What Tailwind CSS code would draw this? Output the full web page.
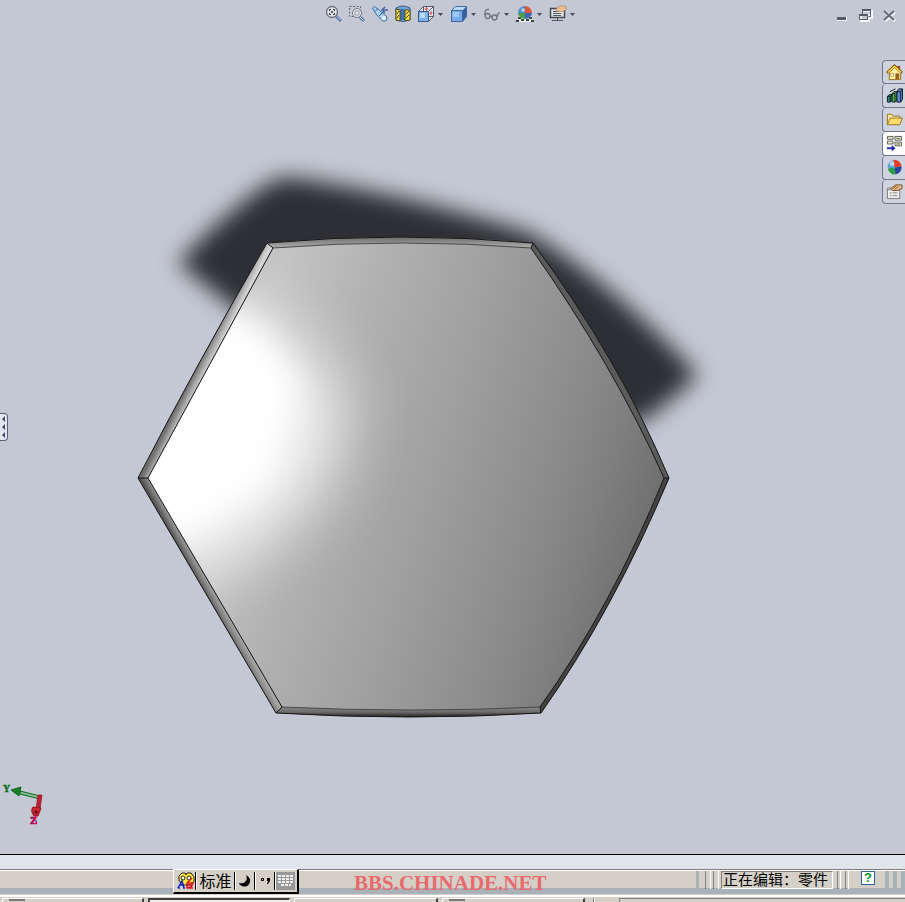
<!DOCTYPE html>
<html lang="zh-CN">
<head>
    <meta charset="UTF-8">
    <meta name="viewport" content="width=device-width, initial-scale=1.0">
    <title>零件</title>
    <script src="https://cdn.jsdelivr.net/npm/@tailwindcss/browser@4"></script>
</head>
<body class="min-h-screen flex flex-col overflow-hidden bg-[#c4c8d4] text-black font-['Liberation_Sans','Noto_Sans_CJK_SC',sans-serif]">

    <!-- Graphics area -->
    <main class="relative flex-1 flex flex-col min-h-[640px]">
        <svg class="absolute inset-0 w-full h-full" viewBox="0 0 905 854" role="img" aria-label="Part">
            <defs>
                <filter id="shadow" x="-20%" y="-30%" width="140%" height="160%" color-interpolation-filters="sRGB"><feGaussianBlur stdDeviation="11"/></filter>
                <filter id="soft" x="-50%" y="-50%" width="200%" height="200%" color-interpolation-filters="sRGB"><feGaussianBlur stdDeviation="32"/></filter>
                <filter id="glow" x="-50%" y="-50%" width="200%" height="200%" color-interpolation-filters="sRGB"><feGaussianBlur stdDeviation="16"/></filter>
                <linearGradient id="face" gradientUnits="userSpaceOnUse" x1="280" y1="270" x2="689" y2="393">
                    <stop offset="0" stop-color="#c4c4c4"/>
                    <stop offset=".24" stop-color="#b0b0b0"/>
                    <stop offset=".46" stop-color="#a1a1a1"/>
                    <stop offset=".55" stop-color="#9a9a9a"/>
                    <stop offset=".75" stop-color="#8b8b8b"/>
                    <stop offset=".87" stop-color="#7f7f7f"/>
                    <stop offset="1" stop-color="#707070"/>
                </linearGradient>
                <linearGradient id="upperLeft" gradientUnits="userSpaceOnUse" x1="201" y1="359" x2="211" y2="364">
                    <stop offset="0" stop-color="#707070"/><stop offset=".5" stop-color="#a8a9aa"/><stop offset="1" stop-color="#d4d4d4"/>
                </linearGradient>
                <linearGradient id="lowerLeft" gradientUnits="userSpaceOnUse" x1="206" y1="596" x2="215" y2="591">
                    <stop offset="0" stop-color="#555"/><stop offset=".5" stop-color="#858585"/><stop offset="1" stop-color="#a8a8a6"/>
                </linearGradient>
                <linearGradient id="top" gradientUnits="userSpaceOnUse" x1="0" y1="237" x2="0" y2="248">
                    <stop offset="0" stop-color="#6c6c6c"/><stop offset="1" stop-color="#b0b0b0"/>
                </linearGradient>
                <linearGradient id="bottom" gradientUnits="userSpaceOnUse" x1="0" y1="707" x2="0" y2="717">
                    <stop offset="0" stop-color="#868686"/><stop offset=".5" stop-color="#6c6c6c"/><stop offset="1" stop-color="#222"/>
                </linearGradient>
                <clipPath id="faceClip"><path d="M148 478L273 248Q402 238 531 248Q614 366 664 478Q612 606 540 707Q411 713 282 707Z"/></clipPath>
            </defs>

            <path filter="url(#shadow)" fill="#2e2f34" d="M178 263Q222 215 270 182Q284 174 310 180Q420 198 530 233Q614 284 698 375Q672 400 642 422L400 430L234 308Z"/>

            <!-- Bevels -->
            <path fill="#777" d="M138 478Q200 358 267 243Q400 231 533 243Q619 359 669 478Q613 611 541 713Q409 721 276 713Z"/>
            <path fill="url(#upperLeft)" d="M138 478Q200 358 267 243L273 248L148 478Z"/>
            <path fill="url(#lowerLeft)" d="M138 478L276 713L282 707L148 478Z"/>
            <path fill="url(#top)" d="M267 243Q400 231 533 243L531 248Q402 238 273 248Z"/>
            <path fill="url(#bottom)" d="M276 713Q409 721 541 713L540 707Q411 713 282 707Z"/>
            <path fill="#5a5b5b" d="M533 243Q619 359 669 478L664 478Q614 366 531 248Z"/>
            <path fill="#424342" d="M669 478Q613 611 541 713L540 707Q612 606 664 478Z"/>

            <!-- Face with highlight -->
            <g clip-path="url(#faceClip)">
                <rect x="130" y="230" width="550" height="490" fill="url(#face)"/>
                <path filter="url(#soft)" fill="#f2f2f2" d="M90 478L195 300L265 310L345 390L330 480L265 545L170 590Z"/>
                <path filter="url(#glow)" fill="#fff" d="M80 478L215 300L262 330L297 382L282 440L266 485L210 520L150 560Z"/>
            </g>

            <g fill="none" stroke="#151515" stroke-width="1">
                <path d="M138 478Q200 358 267 243Q400 231 533 243Q619 359 669 478Q613 611 541 713Q409 721 276 713Z"/>
                <path d="M273 248L148 478L282 707M531 248Q614 366 664 478Q612 606 540 707"/>
                <path stroke="#4b4b4b" d="M273 248Q402 238 531 248M540 707Q411 713 282 707"/>
                <path d="M138 478h10M267 243l6 5M533 243l-2 5M669 478h-5M541 713l-1-6M276 713l6-6"/>
            </g>
        </svg>

        <!-- View toolbar -->
        <header class="relative grid grid-cols-[1fr_auto_1fr] items-center h-7">
            <span></span>
            <nav class="flex items-center pr-1" aria-label="View">
                <button class="w-[23px] flex justify-center" aria-label="Zoom to fit">
                    <svg class="w-[18px] h-[18px]" viewBox="0 0 18 18" fill="none"><path d="M11 11l5 5" stroke="#5577aa" stroke-width="3"/><path d="M11.500 11l4 4" stroke="#c9d9ee"/><circle cx="7" cy="7" r="5.500" fill="#e1e5ea" stroke="#686c74" stroke-width="1.300"/><path d="M4.500 6V4.500h1.500M8 4.500h1.500v1.500M9.500 8v1.500H8M6 9.500H4.500V8" stroke="#333"/><path d="M6 6h2v2H6z" fill="#555"/></svg>
                </button>
                <button class="w-[23px] flex justify-center" aria-label="Zoom to area">
                    <svg class="w-[18px] h-[18px]" viewBox="0 0 18 18" fill="none"><path d="M1.500 1.500h11v10h-11z" stroke="#62666e" stroke-dasharray="2 1.500"/><path d="M12 12l4 4" stroke="#5577aa" stroke-width="3"/><path d="M12 12l3.500 3.500" stroke="#c9d9ee"/><circle cx="9" cy="8" r="4.500" fill="#e1e5ea" stroke="#777b82"/><path d="M7 7V6h4v4H7z" stroke="#9a9ea5"/></svg>
                </button>
                <button class="w-[23px] flex justify-center" aria-label="Previous view">
                    <svg class="w-[18px] h-[18px]" viewBox="0 0 18 18" fill="none"><path d="M1.500 3l2-1.500 4 3L15 11a3 3 0 0 1-4 4.500L5 9z" fill="#a7d2f3" stroke="#456f9f"/><path d="M4 6.500l3-3M8 11l4-4" stroke="#345f94"/><circle cx="13" cy="13" r="2" fill="#e7f6ff"/><path d="M17 5h-6m3-3l-3 3 3 3" stroke="#4a62a6" stroke-width="1.500"/></svg>
                </button>
                <button class="w-[23px] flex justify-center" aria-label="Section view">
                    <svg class="w-[18px] h-[18px]" viewBox="0 0 18 18"><path d="M2 3q7-4 14 0v12q-7 3-14 0z" fill="#74a5d9" stroke="#365b88"/><path d="M6 4h5v11H6z" fill="#3e73ae"/><path d="M2 4l4 1v11l-4-1zM11 5h5v10l-5 1z" fill="#f3dd45" stroke="#504b20"/><path d="M3 9l2-3M3 13l2-3M12 9l3-3M12 13l3-3" stroke="#504b20"/></svg>
                </button>
                <button class="w-[33px] flex items-center gap-[3px] pl-[3px]" aria-label="View orientation">
                    <svg class="w-[18px] h-[18px]" viewBox="0 0 18 18"><path d="M1.500 6.500l5-5h10v10l-5 5h-10z" fill="#e6e8ef" stroke="#555b68"/><path d="M1.500 6.500h10v10h-10z" fill="#7eb1ec" stroke="#38598a"/><path d="M3 8h5v5H3z" fill="#b8dcfb"/><path d="M11.500 6.500l5-5M6.500 1.500v5M11.500 11.500h5" stroke="#555b68" fill="none"/><path d="M7.500 4h4M9.500 2v4M12.500 8h3M14 6v4" stroke="#c8505a"/></svg>
                    <svg class="w-[5px] h-[3px]" viewBox="0 0 5 3"><path d="M0 0h5L2.500 3z" fill="#444b5d"/></svg>
                </button>
                <button class="w-[33px] flex items-center gap-[3px] pl-[3px]" aria-label="Display style">
                    <svg class="w-[18px] h-[18px]" viewBox="0 0 18 18"><path d="M1.500 5.500l4-4h11v10l-4 5h-11z" fill="#b9daf7" stroke="#43689e"/><path d="M12.500 5.500l4-4v10l-4 5z" fill="#375f9f"/><path d="M1.500 5.500h11v11h-11z" fill="#78aae9" stroke="#43689e"/><path d="M3 7h6v5H3z" fill="#9fcafa"/></svg>
                    <svg class="w-[5px] h-[3px]" viewBox="0 0 5 3"><path d="M0 0h5L2.500 3z" fill="#444b5d"/></svg>
                </button>
                <button class="w-[33px] flex items-center gap-[3px] pl-[3px]" aria-label="Hide or show items">
                    <svg class="w-[18px] h-[18px]" viewBox="0 0 18 18" fill="none" stroke="#70757f" stroke-width="1.300"><circle cx="4.500" cy="11" r="2.500"/><circle cx="11.500" cy="12.500" r="2.500"/><path d="M2 10Q1 4 6 4.500M7 11.500h2M14 12q1-5 3-4"/></svg>
                    <svg class="w-[5px] h-[3px]" viewBox="0 0 5 3"><path d="M0 0h5L2.500 3z" fill="#444b5d"/></svg>
                </button>
                <button class="w-[33px] flex items-center gap-[3px] pl-[3px]" aria-label="Apply scene">
                    <svg class="w-[18px] h-[18px]" viewBox="0 0 18 18"><path d="M3 11h12l3 6H0z" fill="#e9eee9"/><path d="M2 12h3v2H2zM0 15h3v2H0zM5 14h3v2H5zM10 14h3v2h-3zM13 12h3v2h-3zM15 15h3v2h-3z" fill="#36463c"/><path d="M9 8V1a7 7 0 0 0-7 7z" fill="#458ac3"/><path d="M9 8V1a7 7 0 0 1 7 7z" fill="#df553b"/><path d="M9 8H2a7 6 0 0 0 7 6z" fill="#4d9f50"/><path d="M9 8h7a7 6 0 0 1-7 6z" fill="#3f67b4"/><circle cx="7" cy="5" r="2" fill="#ccebf3" opacity=".7"/></svg>
                    <svg class="w-[5px] h-[3px]" viewBox="0 0 5 3"><path d="M0 0h5L2.500 3z" fill="#444b5d"/></svg>
                </button>
                <button class="w-[33px] flex items-center gap-[3px] pl-[3px]" aria-label="View settings">
                    <svg class="w-[18px] h-[18px]" viewBox="0 0 18 18"><path d="M1.500 3.500h14v9h-14z" fill="#e1e2e5" stroke="#45484e" stroke-width="1.500"/><path d="M4 6.500h6M4 8.500h8M4 10.500h8M8.500 13v3M3 15.500h11" stroke="#55585e"/><path d="M7 4l4-3h6v4l-4 1.500H8z" fill="#eabf90" stroke="#9a7247" stroke-width=".5"/></svg>
                    <svg class="w-[5px] h-[3px]" viewBox="0 0 5 3"><path d="M0 0h5L2.500 3z" fill="#444b5d"/></svg>
                </button>
            </nav>
            <div class="flex justify-end gap-2 pr-2">
                <button aria-label="Minimize"><svg class="w-4 h-4" viewBox="0 0 16 16"><path d="M4 11h10v4H4z" fill="#f4f5f8"/><path d="M4 11h9v3H4z" fill="#555c69"/></svg></button>
                <button aria-label="Restore"><svg class="w-4 h-4" viewBox="0 0 16 16" fill="none"><path d="M6 5h9v7h-3M4 9h8v6H4z" stroke="#f5f6f9" stroke-width="2"/><path d="M5.500 8V4.500h8v6h-2" stroke="#555c69"/><path d="M5 4h9M2 9h9" stroke="#555c69" stroke-width="2"/><path d="M2.500 9.500h8v4h-8z" stroke="#555c69"/></svg></button>
                <button aria-label="Close"><svg class="w-4 h-4" viewBox="0 0 16 16" fill="none"><path d="M4 6l10 9M14 6L4 15" stroke="#f5f6f9" stroke-width="3"/><path d="M3 5l10 9M13 5L3 14" stroke="#626a77" stroke-width="2"/></svg></button>
            </div>
        </header>

        <!-- Task pane tabs -->
        <aside class="relative self-end mt-8 w-[23px] flex flex-col">
            <button class="h-6 flex items-center justify-center border border-r-0 border-[#6f778e] rounded-l-sm bg-[#cfd3df]" aria-label="Resources">
                <svg class="w-[17px] h-[17px]" viewBox="0 0 18 18"><path d="M12 2h3v6h-3z" fill="#a44a2e"/><path d="M3.500 9v7.500h12V9L9 3z" fill="#fff0a5" stroke="#9b6d16"/><path d="M1 9.500L9 2l8 7.500" fill="none" stroke="#8d6013" stroke-width="3"/><path d="M2 9l7-6.500L16 9" fill="none" stroke="#ffd64b" stroke-width="1.500"/><path d="M5 10h3v3H5z" fill="#fff" stroke="#ad781a" stroke-width=".7"/><path d="M10 10h4v6h-4z" fill="#9c5f15"/></svg>
            </button>
            <button class="h-6 flex items-center justify-center border border-t-0 border-r-0 border-[#6f778e] rounded-l-sm bg-[#cfd3df]" aria-label="Design Library">
                <svg class="w-[17px] h-[17px]" viewBox="0 0 18 18" stroke="#101820"><path d="M1.500 10l2-2h3v6l-2 2h-3z" fill="#268b7d"/><path d="M6.500 7l2-2h3v9l-2 2h-3z" fill="#5fb748"/><path d="M11.500 5l2-3h4v11l-2 3h-4z" fill="#5b8bd0"/><path d="M1.500 10h3v6M6.500 7h3v9M11.500 5h4v11M4.500 10l2-2M9.500 7l2-2M15.500 5l2-3M4 5l6-3" fill="none"/></svg>
            </button>
            <button class="h-6 flex items-center justify-center border border-t-0 border-r-0 border-[#6f778e] rounded-l-sm bg-[#cfd3df]" aria-label="File Explorer">
                <svg class="w-[17px] h-[17px]" viewBox="0 0 18 18" stroke="#9b741e"><path d="M1.500 14.500v-11h5l1 2h7v3" fill="#ffeaa0"/><path d="M1.500 14.500l3-7h13l-3 7z" fill="#ffdc6b"/></svg>
            </button>
            <button class="h-6 flex items-center justify-center border border-t-0 border-r-0 border-[#6f778e] rounded-l-sm bg-white" aria-label="View Palette">
                <svg class="w-[17px] h-[17px]" viewBox="0 0 18 18"><path d="M1.500 1.500h6v3h-6zM9.500 1.500h7v4h-7zM1.500 6.500h6v3h-6zM9.500 7.500h7v4h-7z" fill="#eeefcb" stroke="#55595c"/><path d="M11 3.500h4M11 9.500h4" stroke="#55595c"/><path d="M1 14h7" stroke="#172ba2" stroke-width="2"/><path d="M6 10.500l4 3.500-4 3.500z" fill="#172ba2"/></svg>
            </button>
            <button class="h-6 flex items-center justify-center border border-t-0 border-r-0 border-[#6f778e] rounded-l-sm bg-[#cfd3df]" aria-label="Appearances">
                <svg class="w-[17px] h-[17px]" viewBox="0 0 18 18"><path d="M9 9L8 1a7.500 7.500 0 0 0-6 9z" fill="#54a5d8"/><path d="M9 9L8 1a7.500 7.500 0 0 1 8.500 7z" fill="#e23e25"/><path d="M9 9l-7 1a7.500 7.500 0 0 0 8 6.500z" fill="#2f9e3f"/><path d="M9 9l7.500-1A7.500 7.500 0 0 1 10 16.500z" fill="#2647a1"/><circle cx="6.500" cy="5" r="2.500" fill="#fff" opacity=".6"/></svg>
            </button>
            <button class="h-6 flex items-center justify-center border border-t-0 border-r-0 border-[#6f778e] rounded-l-sm bg-[#cfd3df]" aria-label="Custom Properties">
                <svg class="w-[17px] h-[17px]" viewBox="0 0 18 18"><path d="M1.500 5.500h13v11h-13z" fill="#f2f2f2" stroke="#777"/><path d="M2 6h12v2H2z" fill="#a9abb2"/><path d="M4 10.500h2M7 10.500h5M4 13.500h2M7 13.500h5" stroke="#777"/><path d="M5 6l5-4h7v4l-5 2-5 0z" fill="#eab57f" stroke="#74502f"/><path d="M7 6l4-3M9 7l4-3" stroke="#74502f" stroke-width=".8"/></svg>
            </button>
        </aside>

        <!-- Feature tree handle -->
        <button class="absolute left-0 top-[413px] w-2 h-7 flex items-center justify-start border border-l-0 border-[#596077] rounded-r-sm bg-[#e3e6f1]" aria-label="Expand tree">
            <svg class="w-[6px] h-[24px]" viewBox="0 0 6 24"><path d="M5 1v6L2 4zM5 9v6l-3-3zM5 17v6l-3-3z" fill="#414a6e"/></svg>
        </button>

        <!-- Triad -->
        <svg class="absolute left-0 bottom-6 w-12 h-12" viewBox="0 0 48 48">
            <path d="M20 9L40 14v3L20 12z" fill="#8dbb9b" stroke="#0b6d19"/>
            <path d="M11 8l10-3-2 9z" fill="#16802a" stroke="#0b6d19"/>
            <path d="M38 13h4l-2 14h-4z" fill="#c42030" stroke="#8c1020" stroke-width=".7"/>
            <path d="M33 25l8 1-3 8h-4q-4-5-1-9z" fill="#c92533" stroke="#931221"/>
            <circle cx="36" cy="30" r="1.500" fill="#4a0a12"/>
            <text x="3" y="10" class="font-['Liberation_Serif',serif] font-bold text-[10px]" fill="#087018" stroke="#087018" stroke-width=".4">Y</text>
            <text x="30" y="42" class="font-['Liberation_Serif',serif] font-bold text-[11px]" fill="#d00030" stroke="#d00030" stroke-width=".6">Z</text>
            <path d="M31 36h3M35 39h2M31 41h2" stroke="#2018d0"/>
        </svg>
    </main>

    <!-- Status bar -->
    <footer class="relative border-t border-black bg-[#d4d0c8]">
        <div class="h-[14px] bg-[#e0e4eb]"></div>
        <div class="relative h-[26px] border-t border-[#808080] flex flex-col">
            <div class="h-px bg-white"></div>
            <div class="h-[17px]"></div>
            <div class="h-[6px] bg-[#a9b1b9]"></div>
            <div class="h-px bg-[#d4d0c8]"></div>
            <div class="absolute inset-x-0 top-px h-[18px] flex justify-end items-stretch">
                <div class="w-[25px] flex gap-1">
                    <span class="w-1 bg-[#a9b1b9]"></span>
                    <span class="w-1 border-r border-[#808080]"></span>
                    <span class="w-1 border-x border-l-white border-r-[#808080]"></span>
                    <span class="w-1 border-l border-white"></span>
                </div>
                <p class="w-[112px] pl-px border border-t-[#808080] border-l-[#808080] border-white text-[15px] leading-4 whitespace-nowrap">正在编辑：零件</p>
                <div class="w-[28px] flex gap-1 pl-1">
                    <span class="w-1 border-x border-l-[#808080] border-r-white"></span>
                    <span class="w-1 border-x border-l-[#808080] border-r-white"></span>
                </div>
                <button class="w-[14px] h-[14px] flex bg-white border border-[#31639c]" aria-label="Help">
                    <span class="w-full text-center text-[13px] leading-3 font-bold text-[#0a9228]">?</span>
                </button>
                <div class="w-[30px] flex gap-1 pl-[10px]">
                    <span class="w-1 bg-[#a9b1b9]"></span>
                    <span class="w-1 bg-[#a9b1b9]"></span>
                    <span class="w-1 bg-[#a9b1b9]"></span>
                </div>
            </div>
        </div>

        <!-- Taskbar -->
        <div class="h-[7px] border-t-2 border-white flex items-end gap-1 pl-[2px] overflow-hidden">
            <div class="w-[142px] h-1 border-t border-l border-r-2 border-t-white border-l-white border-r-[#404040]"><span class="block ml-[6px] w-4 h-[2px] bg-[#777]"></span></div>
            <div class="w-[142px] h-1 border-t-2 border-l-2 border-r border-[#404040] border-r-white bg-[#edebe6]"></div>
            <div class="w-[144px] h-1 border-t border-l border-r-2 border-t-white border-l-white border-r-[#404040]"></div>
            <div class="w-[143px] h-1 border-t border-l border-r-2 border-t-white border-l-white border-r-[#404040]"><span class="block ml-[6px] w-4 h-[2px] bg-[#777]"></span></div>
            <div class="ml-1 w-[2px] h-1 border-l border-[#808080] bg-white"></div>
            <div class="ml-5 flex-1 h-1 border-t border-l border-[#808080]"></div>
        </div>

        <!-- Input method bar -->
        <div class="absolute left-[173px] top-[14px] flex h-[25px] p-[2px] bg-[#d4d0c8] border-r-2 border-b-2 border-t border-l border-t-white border-l-white border-r-black border-b-black">
            <button class="w-5 flex items-center justify-center border-r border-black" aria-label="Input method">
                <svg class="w-[18px] h-[18px]" viewBox="0 0 18 18"><path d="M2 9V4l3-3h3l1 2 1-2h4l3 4v5l-4 3H7z" fill="#ffeb35" stroke="#222"/><circle cx="6" cy="6" r="2" fill="#fff" stroke="#222"/><circle cx="12" cy="6" r="2" fill="#fff" stroke="#222"/><path d="M1 16l4-7 2 7M3 13h4M1 16h2M6 16h2" fill="none" stroke="#1226c9" stroke-width="1.500"/><path d="M10 11h6l-2 4-4 1M10 13h6M15 6l-5 5v5h6" fill="none" stroke="#da1825" stroke-width="1.500"/></svg>
            </button>
            <button class="w-[39px] border-l border-r border-l-white border-r-black text-base leading-5 whitespace-nowrap text-center">标准</button>
            <button class="w-5 flex items-center justify-center border-l border-r border-l-white border-r-black" aria-label="Half width">
                <svg class="w-[14px] h-[14px]" viewBox="0 0 14 14"><path d="M8 1q5 3 4 7-2 6-8 4-3-1-3-3 4 1 6-1 3-3 1-7z"/></svg>
            </button>
            <button class="w-5 flex items-center justify-center border-l border-r border-l-white border-r-black" aria-label="Punctuation">
                <svg class="w-3 h-3" viewBox="0 0 12 12"><path d="M2.500 3.500h2v2h-2z" fill="none" stroke="#000"/><path d="M8 3h3v3L9 9H8l1-3H8z"/></svg>
            </button>
            <button class="w-5 flex items-center justify-center border-l border-white bg-[#999]" aria-label="Soft keyboard">
                <svg class="w-4 h-3" viewBox="0 0 16 12"><path d="M0 1h16M0 4h16M0 7h16M3 10h10" stroke="#eee" stroke-width="2" stroke-dasharray="3 1"/></svg>
            </button>
        </div>

        <p class="absolute left-[354px] top-4 font-['Liberation_Serif',serif] font-bold text-[21px] leading-6 text-[#e96a6d]">BBS.CHINADE.NET</p>
    </footer>
</body>
</html>
